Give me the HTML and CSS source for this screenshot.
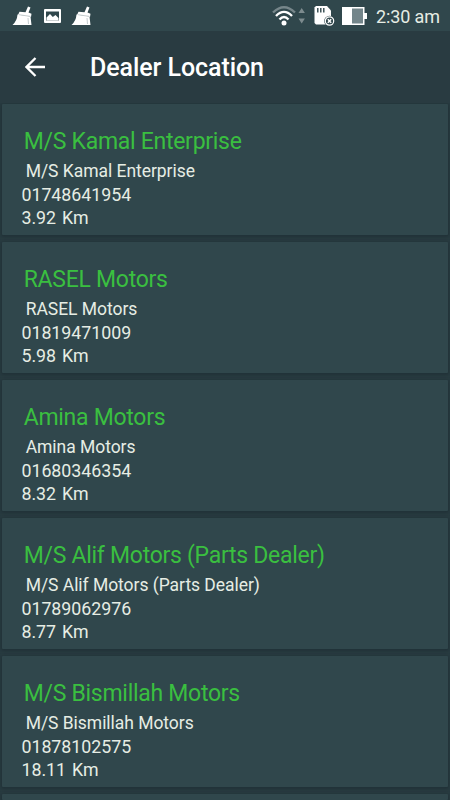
FILE: index.html
```html
<!DOCTYPE html>
<html lang="en">
<head>
  <meta charset="UTF-8" />
  <title>Dealer Location</title>
  <link rel="stylesheet" href="styles.css">
</head>
<body>
  <div class="status-bar">
    <div class="notifications">
      <svg class="broom" width="22" height="20" viewBox="0 0 22 20">
        <path d="M16 .5l2.500 1-2 5 3 1.200-.5 3.300L6 9l1.500-3.300 6 .5z" fill="#fff"/>
        <path d="M5.500 8.500l13 2 1 8.500H.5Q5 15 5.500 8.500z" fill="#fff"/>
        <path d="M7 8.700l11.500 1.700M16 12l.5 6" fill="none" stroke="#8b9b9e" stroke-width=".5"/>
      </svg>
      <svg class="picture" width="17" height="14" viewBox="0 0 17 14">
        <rect width="17" height="14" rx="1" fill="#fff"/>
        <path d="M2 2.500h13v9H2z" fill="#30474c"/>
        <path d="M2.500 11.500V8.500L6 5l2.800 3L11.500 6l3 3v2.500z" fill="#fff"/>
      </svg>
      <svg class="broom" width="22" height="20" viewBox="0 0 22 20">
        <path d="M16 .5l2.500 1-2 5 3 1.200-.5 3.300L6 9l1.500-3.300 6 .5z" fill="#fff"/>
        <path d="M5.500 8.500l13 2 1 8.500H.5Q5 15 5.500 8.500z" fill="#fff"/>
        <path d="M7 8.700l11.500 1.700M16 12l.5 6" fill="none" stroke="#8b9b9e" stroke-width=".5"/>
      </svg>
    </div>
    <div class="system">
      <svg class="wifi" width="34" height="22" viewBox="0 0 34 22">
        <g fill="none" stroke-width="2.400">
          <path d="M1 7.500Q12 -3 23 7.500" stroke="#76868a"/>
          <path d="M4 11Q12 2.800 20 11M7.500 14.500Q12 9.500 16.500 14.500" stroke="#fff"/>
        </g>
        <circle cx="12" cy="18" r="2.500" fill="#fff"/>
        <path d="M26.500 8l3.200-5 3.200 5zM26.500 13.500h6.400l-3.200 5z" fill="#7d8b8e"/>
      </svg>
      <svg class="sdcard" width="21" height="22" viewBox="0 0 21 22">
        <path d="M2 1h11l4 4.500v14H2L.5 18V2.500z" fill="#fff"/>
        <path d="M3.800 3v4.500M6.800 3v4.500M9.800 3v4.500" stroke="#30474c" stroke-width="1.400"/>
        <circle cx="15.500" cy="16" r="5.300" fill="#30474c"/>
        <circle cx="15.500" cy="16" r="4.200" fill="#30474c" stroke="#fff" stroke-width="1.200"/>
        <path d="M13.800 14.300l3.400 3.400M17.200 14.300l-3.400 3.400" stroke="#fff" stroke-width="1.500"/>
      </svg>
      <svg class="battery" width="25" height="18" viewBox="0 0 25 18">
        <path d="M0 0h22.500v6H25v6h-2.500v6H0z" fill="#fff"/>
        <path d="M10 1.500h11v15H10z" fill="#73858a"/>
      </svg>
      <span class="time">2:30 am</span>
    </div>
  </div>

  <div class="app-bar">
    <svg class="back" width="20" height="20" viewBox="0 0 20 20">
      <path d="M20 10H2M10.500 1L1.500 10l9 9" fill="none" stroke="#fff" stroke-width="2.300"/>
    </svg>
    <h1>Dealer Location</h1>
  </div>

  <div class="dealers">
    <div class="card">
      <h2>M/S Kamal Enterprise</h2>
      <p class="name">M/S Kamal Enterprise</p>
      <p>01748641954</p>
      <p class="distance">3.92 Km</p>
    </div>
    <div class="card">
      <h2>RASEL Motors</h2>
      <p class="name">RASEL Motors</p>
      <p>01819471009</p>
      <p class="distance">5.98 Km</p>
    </div>
    <div class="card">
      <h2>Amina Motors</h2>
      <p class="name">Amina Motors</p>
      <p>01680346354</p>
      <p class="distance">8.32 Km</p>
    </div>
    <div class="card">
      <h2>M/S Alif Motors (Parts Dealer)</h2>
      <p class="name">M/S Alif Motors (Parts Dealer)</p>
      <p>01789062976</p>
      <p class="distance">8.77 Km</p>
    </div>
    <div class="card">
      <h2>M/S Bismillah Motors</h2>
      <p class="name">M/S Bismillah Motors</p>
      <p>01878102575</p>
      <p class="distance">18.11 Km</p>
    </div>
    <div class="card next"></div>
  </div>
</body>
</html>
```

FILE: styles.css
```css
* {
  box-sizing: border-box;
}
body {
  font-family: Roboto, "Noto Sans", sans-serif;
  background: #283b40;
  color: #e6ede4;
  margin: 0;
  height: 800px;
  display: flex;
  flex-direction: column;
  overflow: hidden;
}
svg {
  display: block;
  flex: none;
}
.status-bar {
  flex: none;
  height: 31px;
  padding: 0 10px 0 12px;
  background: #30474c;
  display: flex;
  justify-content: space-between;
}
.notifications {
  display: flex;
  align-items: center;
  gap: 10px;
  padding-top: 1px;
}
.picture {
  margin-top: -1px;
}
.system {
  display: flex;
  align-items: center;
}
.sdcard {
  margin-left: 8px;
}
.battery {
  margin-left: 7px;
}
.time {
  margin-left: 9px;
  font-size: 18px;
  letter-spacing: -0.1px;
  line-height: 31px;
  padding-top: 2px;
}
.app-bar {
  flex: none;
  height: 72px;
  padding-left: 25px;
  background: #293b41;
  display: flex;
  align-items: center;
  gap: 45px;
}
.app-bar h1 {
  margin: 0;
  padding-top: 2px;
  color: #fff;
  font-size: 25px;
  font-weight: 500;
  letter-spacing: -0.07px;
  line-height: 30px;
}
.dealers {
  flex: 1;
  min-height: 0;
  padding: 1px 2px 0;
  display: flex;
  flex-direction: column;
  gap: 7px;
  overflow: hidden;
}
.card {
  flex: none;
  height: 131px;
  padding: 23px 20px 0 19px;
  background: #30474c;
  border-radius: 1px;
  box-shadow: 0 1px 3px 1px #213238;
}
.card.next {
  flex: 1;
  min-height: 0;
  padding: 0;
}
.card h2 {
  margin: 0 0 0 2.700px;
  color: #3abf40;
  font-size: 23px;
  font-weight: 400;
  letter-spacing: -0.280px;
  line-height: 30px;
}
.card p {
  margin: 0 0 0 0.400px;
  font-size: 17.800px;
  line-height: 23.700px;
}
.card .name {
  margin-left: 4.700px;
  padding-top: 2.700px;
  font-size: 17.500px;
  letter-spacing: -0.040px;
  line-height: 23px;
}
.card .distance {
  word-spacing: 1.600px;
}
```
